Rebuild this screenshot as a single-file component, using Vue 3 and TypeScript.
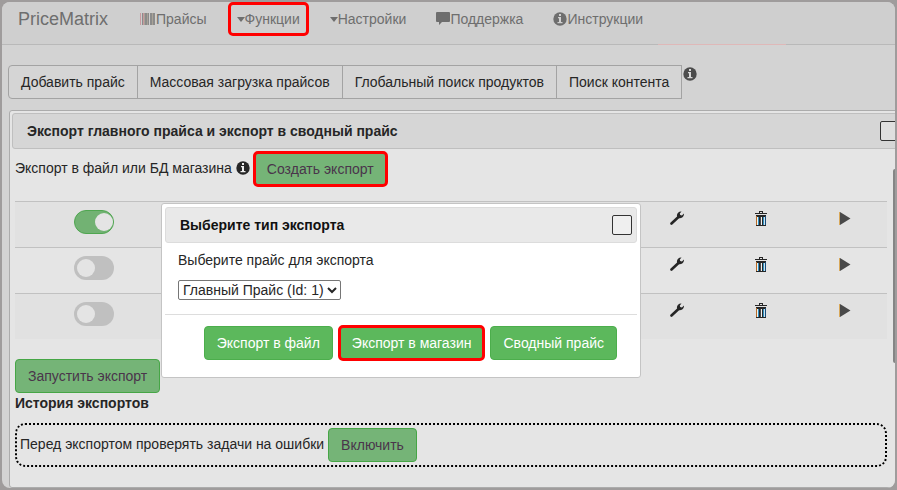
<script setup lang="ts">
import { ref } from 'vue'

interface Task { id: number; enabled: boolean }

const tools: string[] = ['Добавить прайс', 'Массовая загрузка прайсов', 'Глобальный поиск продуктов', 'Поиск контента']
const tasks = ref<Task[]>([
  { id: 1, enabled: true },
  { id: 2, enabled: false },
  { id: 3, enabled: false },
])
const price = ref('1')
</script>

<template>
  <div class="frame">
    <div class="page">
      <nav class="navbar">
        <a class="brand" href="#">PriceMatrix</a>
        <a class="nav-link" href="#">
          <svg class="icon wide" viewBox="0 0 16 14" aria-hidden="true">
            <path fill="#c79a9f" d="M0 1h1v12H0zM3 1h1v12H3z" />
            <path fill="#8b8b8b" d="M2 1h1v12H2zM5 1h2v12H5zM8 1h1v12H8zM10 1h2v12h-2zM13 1h2v12h-2z" />
            <path fill="#a9a397" d="M4 1h1v12H4zM7 1h1v12H7zM12 1h1v12h-1z" />
          </svg>Прайсы
        </a>
        <a class="nav-link marked" href="#"><span class="caret"></span>Функции</a>
        <a class="nav-link" href="#"><span class="caret"></span>Настройки</a>
        <a class="nav-link" href="#">
          <svg class="icon" viewBox="0 0 14 14" aria-hidden="true">
            <path fill="currentColor" d="M1 0h12q1 0 1 1v8q0 1-1 1H6l-3 3v-3H1q-1 0-1-1V1q0-1 1-1z" />
          </svg>Поддержка
        </a>
        <a class="nav-link" href="#">
          <svg class="icon" viewBox="0 0 14 14" aria-hidden="true">
            <circle cx="7" cy="7" r="6.7" fill="currentColor" />
            <path fill="#d0d0d0" d="M6 2h2v2H6zM5 5h3v5h1.500v1.200h-5V10H6V6.200H5z" />
          </svg>Инструкции
        </a>
      </nav>
      <div class="progress"></div>

      <div class="toolbar">
        <div class="group">
          <button v-for="tool in tools" :key="tool" type="button" class="tool">{{ tool }}</button>
        </div>
        <svg class="icon help" viewBox="0 0 14 14" aria-hidden="true">
          <circle cx="7" cy="7" r="6.700" fill="currentColor" />
          <path fill="#d8d8d8" d="M6 2h2v2H6zM5 5h3v5h1.500v1.200h-5V10H6V6.200H5z" />
        </svg>
      </div>

      <main class="panel">
        <header class="titlebar">
          <h1 class="title">Экспорт главного прайса и экспорт в сводный прайс</h1>
          <button type="button" class="close" aria-label="Закрыть"></button>
        </header>

        <div class="body">
          <div class="line create">
            <span>Экспорт в файл или БД магазина</span>
            <svg class="icon" viewBox="0 0 14 14" aria-hidden="true">
              <circle cx="7" cy="7" r="6.700" fill="currentColor" />
              <path fill="#eeeeee" d="M6 2h2v2H6zM5 5h3v5h1.500v1.200h-5V10H6V6.200H5z" />
            </svg>
            <button type="button" class="btn dim ringed">Создать экспорт</button>
          </div>

          <table class="tasks">
            <tbody>
              <tr v-for="task in tasks" :key="task.id">
                <td class="state">
                  <input v-model="task.enabled" type="checkbox" class="switch" aria-label="Включён" />
                </td>
                <td></td>
                <td class="action">
                  <button type="button" class="act" aria-label="Настроить">
                    <svg class="icon" viewBox="0 0 14 14" aria-hidden="true">
                      <path fill="none" stroke="currentColor" stroke-width="2.600" stroke-linecap="round" d="M1.500 12.500L9 5.500" />
                      <path fill="currentColor" d="M7 5.500C6.500 2.500 8.500.2 11.500.4L9.800 2.500l.4 1.600 1.700.4L14 2.600c.2 3-2.500 5-5.200 4.600z" />
                    </svg>
                  </button>
                </td>
                <td class="action">
                  <button type="button" class="act" aria-label="Удалить">
                    <svg class="icon tall" viewBox="0 0 14 16" aria-hidden="true">
                      <path fill="#262626" d="M5 0h4v2h4v1H1V2h4zM6 1v1h2V1zM2 4h10v2H2z" />
                      <path fill="#262626" d="M5 6h1v8H5zM8 6h1v8H8zM2 14h10v1H2z" />
                      <path fill="#b56b26" d="M2 5h1v9H2z" />
                      <path fill="#2f8fc0" d="M4 6h1v8H4zM9 6h1v8H9z" />
                      <path fill="#174b78" d="M11 5h1v9h-1z" />
                      <path fill="#f2f2f2" d="M3 6h1v8H3zM7 6h1v8H7z" />
                      <path fill="#4a4a4a" d="M6 6h1v8H6z" />
                      <path fill="#cfe3ee" d="M10 6h1v8h-1z" />
                    </svg>
                  </button>
                </td>
                <td class="action">
                  <button type="button" class="act" aria-label="Запустить">
                    <svg class="icon" viewBox="0 0 14 14" aria-hidden="true">
                      <path fill="#d8a85a" d="M1 1h1v13H1z" />
                      <path fill="#494949" d="M2 1l10.500 6.500L2 14z" />
                    </svg>
                  </button>
                </td>
              </tr>
            </tbody>
          </table>

          <button type="button" class="btn dim">Запустить экспорт</button>
          <h2 class="history">История экспортов</h2>
          <div class="line check">
            <span>Перед экспортом проверять задачи на ошибки</span>
            <button type="button" class="btn dim">Включить</button>
          </div>
        </div>

        <section class="modal" role="dialog" aria-labelledby="modal-title">
          <header class="titlebar light">
            <h2 id="modal-title" class="title">Выберите тип экспорта</h2>
            <button type="button" class="close" aria-label="Закрыть"></button>
          </header>
          <div class="field">
            <label for="price">Выберите прайс для экспорта</label>
            <select id="price" v-model="price">
              <option value="1">Главный Прайс (Id: 1)</option>
            </select>
          </div>
          <footer class="choices">
            <button type="button" class="btn">Экспорт в файл</button>
            <button type="button" class="btn ringed">Экспорт в магазин</button>
            <button type="button" class="btn">Сводный прайс</button>
          </footer>
        </section>
      </main>
      <div class="scrollbar" aria-hidden="true"></div>
    </div>
  </div>
</template>

<style>
body {
  background: #9f9c9c;
}
</style>

<style scoped>
* {
  box-sizing: border-box;
}
.frame {
  display: flex;
  min-height: 100vh;
  padding: 2px;
  font: 14px/20px "Liberation Sans", Arial, sans-serif;
  color: #262626;
}
.page {
  position: relative;
  display: flex;
  flex-direction: column;
  flex: 1;
  min-width: 0;
  overflow: hidden;
  border-radius: 8px;
  background: #d3d3d3;
}
button,
select {
  font: inherit;
  color: inherit;
}
.icon {
  flex: none;
  width: 14px;
  height: 14px;
}
.icon.wide {
  width: 16px;
}
.icon.tall {
  height: 16px;
}
.navbar {
  display: flex;
  align-items: center;
  height: 42px;
  padding: 0 0 8px;
  background: #cfcfcf;
  color: #6e6e6e;
  white-space: nowrap;
}
.brand {
  margin: 0 17px 0 16px;
  font-size: 18px;
  color: inherit;
  text-decoration: none;
}
.nav-link {
  display: flex;
  align-items: center;
  margin: 0 2px;
  padding: 6px 13px;
  color: inherit;
  text-decoration: none;
}
.nav-link.marked {
  margin: 0 9px;
  padding: 4px 6px;
  border-radius: 2px;
  outline: 3px solid #ff0000;
}
.caret {
  border: 4px solid transparent;
  border-top: 5px solid currentColor;
  border-bottom: 0;
}
.progress {
  flex: none;
  height: 1px;
  background: linear-gradient(#dfb8b8, #dfb8b8) 656px 0 / 128px 1px no-repeat #b9b9b9;
}
.toolbar {
  display: flex;
  align-items: flex-start;
  padding: 20px 6px 11px;
}
.group {
  display: flex;
}
.tool {
  height: 34px;
  margin: 0 0 0 -1px;
  padding: 0 12px;
  border: 1px solid #a3a3a3;
  background: #d5d5d5;
  white-space: nowrap;
}
.tool:first-child {
  margin-left: 0;
  border-radius: 4px 0 0 4px;
}
.help {
  margin: 2px 1px;
  color: #4c4c4c;
}
.panel {
  position: relative;
  flex: 1;
  margin: 0 -13px 0 7px;
  padding: 2px;
  border: 1px solid #acacac;
  border-radius: 3px;
  background: #e5e5e5;
}
.titlebar {
  display: flex;
  align-items: center;
  justify-content: space-between;
  height: 36px;
  padding: 0 4px 0 14px;
  border: 1px solid #bfbfbf;
  border-radius: 3px;
  background: #d6d6d6;
}
.titlebar.light {
  border-color: #dcdcdc;
  background: #e9e9e9;
  color: #111111;
}
.title {
  margin: 0;
  font-size: 14px;
  line-height: 20px;
}
.close {
  width: 20px;
  height: 20px;
  padding: 0;
  border: 1px solid #333333;
  border-radius: 2px;
  background: #efefef;
}
.panel > .titlebar .close {
  background: #dfdfdf;
}
.body {
  padding: 3px 18px 18px 3px;
}
.line {
  display: flex;
  align-items: center;
  gap: 4px;
}
.create {
  margin-bottom: 15px;
}
.line > span,
.line > .icon {
  margin-bottom: 2px;
}
.btn {
  height: 34px;
  padding: 0 12px;
  border: 1px solid #4cae4c;
  border-radius: 4px;
  background: #5cb85c;
  color: #ffffff;
  white-space: nowrap;
}
.btn.dim {
  border-color: #46a646;
  background: #75b477;
  color: #4a354b;
}
.btn.ringed {
  border: 0;
  padding: 0 13px;
  outline: 3px solid #ff0000;
  outline-offset: -2px;
}
.tasks {
  width: 100%;
  margin-bottom: 20px;
  border-collapse: separate;
  border-spacing: 0;
  table-layout: fixed;
}
.tasks td {
  height: 46px;
  padding: 8px 0 0;
  border-top: 1px solid #c1c1c1;
  vertical-align: top;
  text-align: center;
}
.tasks tr:nth-child(odd) td {
  background: #e1e1e1;
}
.state {
  width: 158px;
}
.action {
  width: 84px;
}
.switch {
  appearance: none;
  display: block;
  width: 40px;
  height: 24px;
  margin: 0 auto;
  padding: 3px;
  border-radius: 12px;
  background: #c0c0c0;
}
.switch::before {
  content: "";
  display: block;
  width: 18px;
  height: 18px;
  border-radius: 50%;
  background: #e4e4e4;
}
.switch:checked {
  background: #72b273;
  border: 1px solid #4fa650;
  padding: 2px 0 2px 2px;
}
.switch:checked::before {
  margin-left: auto;
}
.act {
  display: inline-flex;
  justify-content: center;
  padding: 1px 0;
  border: 0;
  background: none;
}
.history {
  margin: 0 0 10px;
  font-size: 14px;
  line-height: 20px;
}
.check {
  height: 44px;
  padding: 0 3px;
  border: 2px dotted #000000;
  border-radius: 10px;
}
.modal {
  position: absolute;
  top: 92px;
  left: 151px;
  width: 480px;
  padding: 3px;
  border: 1px solid #c4c4c4;
  border-radius: 3px;
  background: #ffffff;
}
.field {
  display: flex;
  flex-direction: column;
  align-items: flex-start;
  gap: 10px;
  padding: 7px 13px 14px;
  border-bottom: 1px solid #dddddd;
}
.field select {
  height: 20px;
  padding: 0;
  border: 1px solid #767676;
  border-radius: 2px;
  background-color: #ffffff;
}
.choices {
  display: flex;
  justify-content: flex-end;
  gap: 6px;
  padding: 11px 20px 14px;
}
.scrollbar {
  position: absolute;
  top: 167px;
  right: 0;
  width: 2px;
  height: 194px;
  border-radius: 2px 0 0 2px;
  background: #858585;
}
</style>
